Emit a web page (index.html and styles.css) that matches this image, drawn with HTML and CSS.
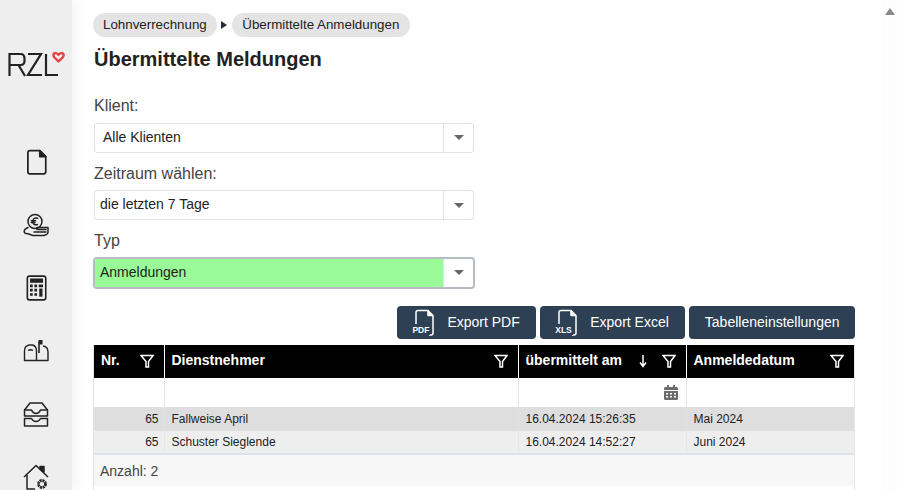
FILE: index.html
```html
<!DOCTYPE html>
<html lang="de">
<head>
<meta charset="utf-8">
<title>Übermittelte Meldungen</title>
<link rel="stylesheet" href="styles.css">
</head>
<body>
<div class="app">
  <aside class="sidebar">
    <svg class="logo" viewBox="0 0 58 26" width="58" height="26" fill="none" stroke="#222" stroke-width="2.200">
      <path d="M2.500 25V3H13.500Q17.500 3 17.500 7.500V10Q17.500 14 13.500 14H3M11.500 14L18 25"/>
      <path d="M21 3H34L21 24H35"/>
      <path d="M39 3V24H51"/>
      <path d="M51.500 10.500L47 6Q45.500 3 47.800 2.200Q49.800 1.800 51.500 3.800Q53.200 1.800 55.200 2.200Q57.500 3 56 6Z" stroke="#e8403f" stroke-width="2.400" stroke-linejoin="round"/>
    </svg>
    <nav class="nav">
      <svg class="ico" viewBox="0 0 24 24" width="26" height="26" fill="none" stroke="#222" stroke-width="1.600" stroke-linejoin="round"><path d="M6.500 1.500H15.500L21 7V21Q21 23 19 23H6.500Q4.500 23 4.500 21V3.500Q4.500 1.500 6.500 1.500Z"/><path d="M15.500 1.500L21 7H15.500Z" fill="#222"/></svg>
      <svg class="ico" viewBox="0 0 26 26" width="26" height="26" fill="none" stroke="#222" stroke-width="1.500" stroke-linejoin="round" stroke-linecap="round"><circle cx="12" cy="9.500" r="7"/><path d="M14.500 6.300Q10.300 5 9.800 9.500Q10.200 13.800 14.500 12.500M8.300 8.700H12.500M8.300 10.500H12"/><path d="M5 15.500Q1 17 1.200 20Q1.800 22 5 21.800L10 23.500H21Q25 22.500 25 20V15.500H14V17.500H23M11 20H23"/></svg>
      <svg class="ico" viewBox="0 0 24 24" width="26" height="26" fill="none" stroke="#222" stroke-width="1.500"><rect x="4" y="1" width="17" height="22" rx="2"/><rect x="6.500" y="3.200" width="12" height="4" fill="#222" stroke="none"/><path d="M6.500 10H9M10.500 10H13M14.500 10H18.500M6.500 14H9M10.500 14H13M6.500 18H9M10.500 18H13" stroke-width="2.400"/><path d="M16.500 12.500V20" stroke-width="3"/></svg>
      <svg class="ico" viewBox="0 0 26 26" width="26" height="26" fill="none" stroke="#222" stroke-width="1.400" stroke-linejoin="round"><path d="M1.500 22.500V13Q1.500 7.500 6.500 7H9.500Q13.500 8 13.500 13V22.500ZM13.500 22.500H25V14Q25 8.500 20 8"/><path d="M5 12.500Q7.500 11 10 12.500" stroke-width="1.300"/><path d="M16 15V2.500" stroke-width="1.600"/><path d="M16 2H19.500V6.500H16Z" fill="#222" stroke="none"/></svg>
      <svg class="ico" viewBox="0 0 26 26" width="26" height="26" fill="none" stroke="#222" stroke-width="1.500" stroke-linejoin="round"><path d="M1.500 9L7 2H19L24.500 9V15H1.500Z"/><path d="M1.500 9H8.500Q10 12.500 13 12.500Q16 12.500 17.500 9H24.500"/><path d="M1.500 17.500H8.500Q10 20.500 13 20.500Q16 20.500 17.500 17.500H24.500V25H1.500Z"/></svg>
      <svg class="ico" viewBox="0 0 26 26" width="26" height="26" fill="none" stroke="#222" stroke-width="1.500" stroke-linejoin="round"><path d="M1 13L13 1.500L25 13"/><path d="M4 11V25H12"/><path d="M17 2.500H21V8L17 5Z" fill="#222"/><circle cx="19" cy="20" r="3.500" stroke-width="2.800" stroke-dasharray="2 0.750"/></svg>
    </nav>
  </aside>
  <main class="main">
    <div class="crumbs">
      <span class="pill">Lohnverrechnung</span>
      <span class="crumb-arrow"></span>
      <span class="pill">Übermittelte Anmeldungen</span>
    </div>
    <h1 class="title">Übermittelte Meldungen</h1>
    <div class="form">
      <label class="label">Klient:</label>
      <div class="select"><span class="value value-wide">Alle Klienten</span><span class="caret"><i></i></span></div>
      <label class="label">Zeitraum wählen:</label>
      <div class="select"><span class="value">die letzten 7 Tage</span><span class="caret"><i></i></span></div>
      <label class="label">Typ</label>
      <div class="select select-focus"><span class="value value-green">Anmeldungen</span><span class="caret"><i></i></span></div>
    </div>
    <div class="toolbar">
      <button class="btn btn-icon">
        <svg viewBox="0 0 34 32" width="34" height="32" fill="none" stroke="#fff" stroke-width="1.500" stroke-linejoin="round"><path d="M9 17V5.500Q9 3.500 11 3.500H21L26 8.500V26Q26 28 24 28H22"/><path d="M21 3.500V8.500H26" fill="#fff"/></svg>
        <span class="ftype">PDF</span>
        <span>Export PDF</span>
      </button>
      <button class="btn btn-icon">
        <svg viewBox="0 0 34 32" width="34" height="32" fill="none" stroke="#fff" stroke-width="1.500" stroke-linejoin="round"><path d="M9 17V5.500Q9 3.500 11 3.500H21L26 8.500V26Q26 28 24 28H22"/><path d="M21 3.500V8.500H26" fill="#fff"/></svg>
        <span class="ftype">XLS</span>
        <span>Export Excel</span>
      </button>
      <button class="btn">Tabelleneinstellungen</button>
    </div>
    <div class="grid">
      <table class="tbl">
        <colgroup><col class="c1"><col class="c2"><col class="c3"><col class="c4"></colgroup>
        <thead>
          <tr>
            <th><div class="th"><span>Nr.</span><svg class="filter" viewBox="0 0 14 14" width="14" height="14"><path d="M1 1.500H13L8.500 7.500V13H6V7.500Z" fill="none" stroke="#fff" stroke-width="1.500"/></svg></div></th>
            <th><div class="th"><span>Dienstnehmer</span><svg class="filter" viewBox="0 0 14 14" width="14" height="14"><path d="M1 1.500H13L8.500 7.500V13H6V7.500Z" fill="none" stroke="#fff" stroke-width="1.500"/></svg></div></th>
            <th><div class="th"><span class="grow">übermittelt am</span><svg class="sort" viewBox="0 0 10 14" width="10" height="14"><path d="M5 1V12M2 8.500L5 12.500L8 8.500" fill="none" stroke="#fff" stroke-width="1.500"/></svg><svg class="filter" viewBox="0 0 14 14" width="14" height="14"><path d="M1 1.500H13L8.500 7.500V13H6V7.500Z" fill="none" stroke="#fff" stroke-width="1.500"/></svg></div></th>
            <th><div class="th"><span>Anmeldedatum</span><svg class="filter" viewBox="0 0 14 14" width="14" height="14"><path d="M1 1.500H13L8.500 7.500V13H6V7.500Z" fill="none" stroke="#fff" stroke-width="1.500"/></svg></div></th>
          </tr>
        </thead>
        <tbody>
          <tr class="filter-row">
            <td></td><td></td>
            <td class="cal-cell"><svg viewBox="0 0 14 15" width="14" height="15"><path d="M3 0H5V2H9V0H11V2H12.500Q14 2 14 3.500V5H0V3.500Q0 2 1.500 2H3ZM0 6H14V13.500Q14 15 12.500 15H1.500Q0 15 0 13.500ZM2 8V9.500H4V8ZM6 8V9.500H8V8ZM10 8V9.500H12V8ZM2 11V12.500H4V11ZM6 11V12.500H8V11ZM10 11V12.500H12V11Z" fill="#6c6c6c" fill-rule="evenodd"/></svg></td>
            <td></td>
          </tr>
          <tr class="row-a">
            <td class="num">65</td><td>Fallweise April</td><td>16.04.2024 15:26:35</td><td>Mai 2024</td>
          </tr>
          <tr class="row-b">
            <td class="num">65</td><td>Schuster Sieglende</td><td>16.04.2024 14:52:27</td><td>Juni 2024</td>
          </tr>
        </tbody>
      </table>
      <div class="footer">Anzahl: 2</div>
    </div>
  </main>
  <div class="scrollbar"><i></i></div>
</div>
</body>
</html>
```
FILE: styles.css
```css
* { box-sizing: border-box; }
html, body { margin: 0; height: 100%; overflow: hidden; background: #fff; }
body { font-family: "Liberation Sans", Arial, sans-serif; color: #222; }
.app { display: flex; height: 490px; overflow: hidden; }

.sidebar { width: 72px; flex: none; background: #eee; box-shadow: 4px 0 12px rgba(0,0,0,.05); display: flex; flex-direction: column; align-items: center; padding-top: 51px; z-index: 1; }
.logo { display: block; }
.nav { margin-top: 72px; display: flex; flex-direction: column; gap: 37px; }
.ico { display: block; }

.main { flex: 1; min-width: 0; padding: 13px 42px 0 21px; }
.crumbs { display: flex; align-items: center; height: 24px; }
.pill { background: #e4e4e4; border-radius: 12px; height: 24px; line-height: 24px; padding: 0 10.5px 0 10px; font-size: 13.33px; color: #222; }
.crumb-arrow { width: 0; height: 0; border-left: 6px solid #1e2d3d; border-top: 4px solid transparent; border-bottom: 4px solid transparent; margin: 0 5px 0 4px; }
.title { margin: 9px 0 0 1px; font-size: 20px; line-height: 26px; font-weight: bold; color: #222; }

.form { width: 380px; margin-top: 23.4px; margin-left: 1px; }
.label { display: block; font-size: 16px; line-height: 20.5px; color: #444; padding-top: 1px; margin-bottom: 6px; }
.select { display: flex; height: 30px; border: 1px solid #e3e3e3; border-radius: 3px; margin-bottom: 10px; background: #fff; font-size: 14px; line-height: 27px; }
.value { flex: 1; padding-left: 5px; color: #222; }
.value-wide { padding-left: 8px; }
.value-green { background: #98fb98; border-radius: 2px 0 0 2px; }
.caret { width: 30px; border-left: 1px solid #e3e3e3; display: flex; align-items: center; justify-content: center; }
.caret i { width: 0; height: 0; border-left: 5px solid transparent; border-right: 5px solid transparent; border-top: 5px solid #666; }
.select-focus { border-color: #b8bcc2; box-shadow: 0 0 0 1px #b6bac1; }

.toolbar { display: flex; justify-content: flex-end; gap: 4px; margin-top: 18px; }
.btn { position: relative; height: 33px; background: #2e4053; color: #fff; border: 0; border-radius: 4px; font: 14px "Liberation Sans", Arial, sans-serif; padding: 0 15.5px; display: flex; align-items: center; }
.btn-icon { padding: 0 16.5px 0 10px; gap: 6px; }
.btn-icon svg { display: block; margin-top: 2px; }
.ftype { position: absolute; left: 15px; bottom: 4px; font-size: 8.5px; line-height: 10px; font-weight: bold; background: #2e4053; padding: 0 1px 0 0; }

.grid { margin-top: 6px; border-left: 1px solid #e2e2e2; border-right: 1px solid #e6e6e6; height: 160px; }
.tbl { width: 760px; table-layout: fixed; border-collapse: collapse; font-size: 12px; }
.c1 { width: 70px; } .c2 { width: 354px; } .c3 { width: 168px; } .c4 { width: 168px; }
th { background: #000; color: #fff; height: 33px; padding: 0 7px; border-left: 1px solid #fff; text-align: left; font-size: 14px; font-weight: bold; }
th:first-child { border-left: 0; }
.th { display: flex; align-items: center; justify-content: space-between; padding-bottom: 2px; }
.grow { flex: 1; }
.sort { margin-right: 14px; margin-top: 2px; }
.filter { margin: 2px 3px 0 0; display: block; }
td { padding: 0 7px; height: 23px; border-left: 1px solid #e4e6ea; color: #222; }
td:first-child { border-left: 0; }
.num { text-align: right; padding-right: 5px; }
.filter-row td { height: 29px; background: #fff; }
.cal-cell { padding-right: 8px; }
.cal-cell svg { display: block; margin-left: auto; }
.row-a td { background: #dedede; height: 24px; border-left-color: #e2e2e2; }
.row-b td { background: #eee; height: 22px; }
.footer { border-top: 2px solid #dfe2e6; height: 33px; background: #f7f7f7; font-size: 14px; line-height: 32px; padding-left: 6px; color: #444; }

.scrollbar { position: absolute; right: 0; top: 0; width: 15px; height: 490px; background: #fdfdfd; }
.scrollbar i { position: absolute; left: 3px; top: 8px; width: 0; height: 0; border-left: 5px solid transparent; border-right: 5px solid transparent; border-bottom: 7px solid #8a8a8a; }
```
